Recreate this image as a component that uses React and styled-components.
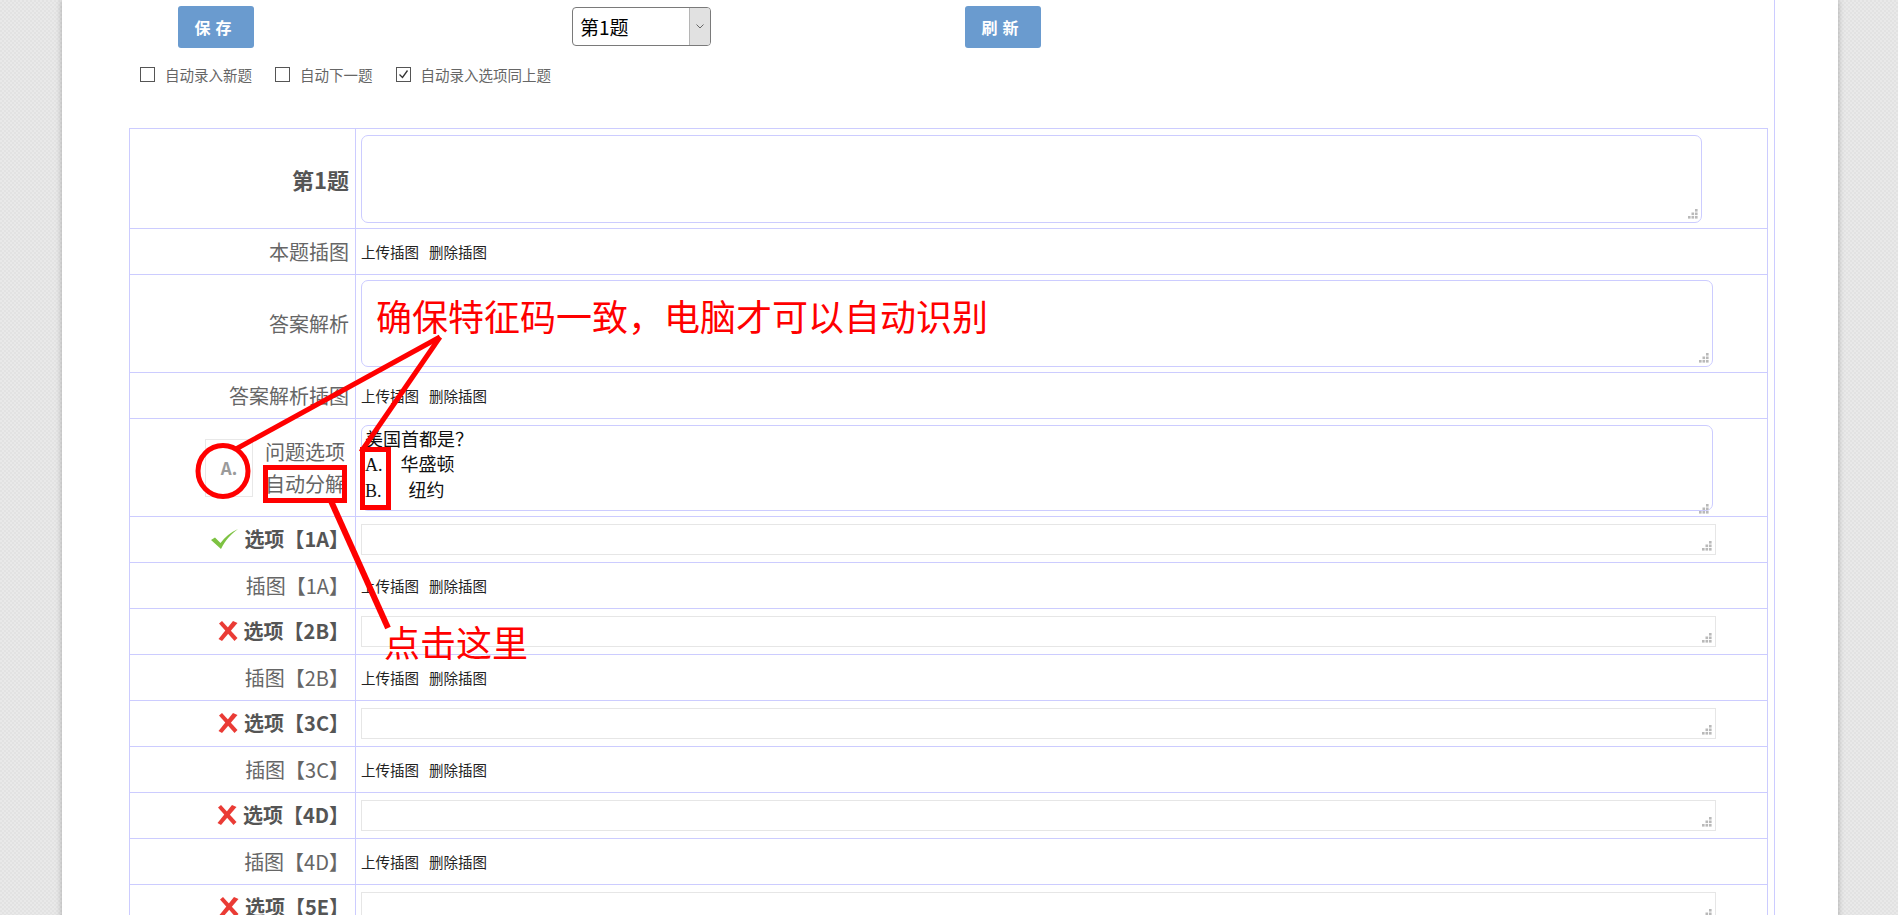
import React from "react";
import styled, { createGlobalStyle } from "styled-components";

const GlobalStyle = createGlobalStyle`
  html, body {
    margin: 0;
    padding: 0;
    overflow: hidden;
  }
  body {
    font-family: "Noto Sans CJK SC", "Noto Sans", sans-serif;
    background-color: #e9e9e9;
    background-image:
      linear-gradient(45deg, #e2e2e2 25%, transparent 25%, transparent 75%, #e2e2e2 75%),
      linear-gradient(45deg, #e2e2e2 25%, transparent 25%, transparent 75%, #e2e2e2 75%);
    background-size: 4px 4px;
    background-position: 0 0, 2px 2px;
  }
`;

const Root = styled.div`
  position: relative;
  height: 915px;
  overflow: hidden;
`;

const Page = styled.div`
  margin-left: 62px;
  width: 1776px;
  min-height: 915px;
  background: #fff;
  box-shadow: 0 0 6px rgba(0, 0, 0, 0.28);
`;

const Frame = styled.div`
  margin-right: 63px;
  min-height: 915px;
  border-right: 1px solid #ccccff;
`;

const Toolbar = styled.div`
  display: flex;
  align-items: flex-start;
  padding: 6px 0 0 116px;
`;

const BlueButton = styled.button`
  margin-left: ${(p) => p.$offset || 0}px;
  width: 76px;
  height: 42px;
  border: none;
  border-radius: 3px;
  background: #6a9bcf;
  color: #fff;
  font-family: "Noto Sans CJK SC", sans-serif;
  font-size: 16px;
  font-weight: bold;
  letter-spacing: 5px;
  padding-left: 5px;
  cursor: pointer;
`;

const SelectBox = styled.div`
  margin-left: ${(p) => p.$offset || 0}px;
  margin-top: 1px;
  display: flex;
  width: 139px;
  height: 39px;
  box-sizing: border-box;
  border: 1px solid #7a7a7a;
  border-radius: 4px;
  overflow: hidden;
  background: #fff;
`;

const SelectValue = styled.span`
  flex: 1;
  display: flex;
  align-items: center;
  padding-left: 7px;
  font-size: 19px;
  color: #000;
`;

const SelectArrow = styled.span`
  width: 20px;
  display: flex;
  align-items: center;
  justify-content: center;
  background: #e1e1e1;
  border-left: 1px solid #b5b5b5;
`;

const ChecksRow = styled.div`
  display: flex;
  align-items: center;
  padding: 18px 0 0 78px;
  height: 17px;
`;

const CheckItem = styled.label`
  display: flex;
  align-items: center;
  margin-right: 23px;
  font-size: 14.5px;
  color: #666;
`;

const Box = styled.span`
  width: 13px;
  height: 13px;
  border: 1px solid #555;
  margin-right: 10px;
  display: flex;
  align-items: center;
  justify-content: center;
  background: #fff;
`;

const Table = styled.table`
  margin: 45px 0 0 67px;
  width: 1639px;
  border-collapse: collapse;
  border: 1px solid #ccccff;
`;

const Row = styled.tr`
  height: ${(p) => p.$h}px;
`;

const LabelCell = styled.td`
  width: 219px;
  border: 1px solid #ccccff;
  padding: 0 6px 0 0;
  text-align: right;
  vertical-align: middle;
  font-size: ${(p) => (p.$big ? 22 : 20)}px;
  font-weight: ${(p) => (p.$bold ? "bold" : "normal")};
  color: ${(p) => (p.$bold ? "#555" : "#666")};
  white-space: nowrap;
`;

const LabelInner = styled.span`
  display: inline-flex;
  align-items: center;
  gap: 6px;
`;

const ContentCell = styled.td`
  border: 1px solid #ccccff;
  padding: 0 0 0 5px;
  vertical-align: middle;
`;

const Links = styled.div`
  display: flex;
  gap: 10px;
  font-size: 14.5px;
  color: #222;
`;

const Field = styled.div`
  width: ${(p) => p.$w}px;
  height: ${(p) => p.$h}px;
  box-sizing: border-box;
  border: 1px solid ${(p) => (p.$plain ? "#e6e6e6" : "#ccccff")};
  border-radius: ${(p) => (p.$plain ? 0 : 7)}px;
  padding: 2px 3px 3px 3px;
  display: flex;
  flex-direction: column;
  background: #fff;
`;

const FieldText = styled.div`
  flex: 1;
  font-family: "Liberation Serif", "Noto Sans CJK SC", serif;
  font-size: 18px;
  line-height: 25.5px;
  color: #111;
  white-space: pre;
`;

const GripWrap = styled.span`
  align-self: flex-end;
  display: flex;
  margin-top: auto;
`;

const SplitLabel = styled.div`
  display: flex;
  align-items: center;
  justify-content: flex-end;
  gap: 12px;
`;

const KeyBox = styled.span`
  width: 46px;
  height: 56px;
  border: 1px solid #e8e8e8;
  display: flex;
  align-items: center;
  justify-content: center;
  font-size: 17px;
  font-weight: bold;
  color: #9a9a9a;
`;

const TwoLines = styled.span`
  display: flex;
  flex-direction: column;
  line-height: 32px;
  padding-right: 4px;
`;

const Overlay = styled.div`
  position: absolute;
  left: 0;
  top: 0;
  width: 1898px;
  height: 915px;
  pointer-events: none;
`;

const Note = styled.span`
  position: absolute;
  left: ${(p) => p.$x}px;
  top: ${(p) => p.$y}px;
  font-family: "Noto Sans CJK SC", sans-serif;
  font-size: 36px;
  line-height: 36px;
  color: #ff0000;
  white-space: nowrap;
`;

function Grip() {
  const dots = [
    [7, 0],
    [3.5, 3.5],
    [7, 3.5],
    [0, 7],
    [3.5, 7],
    [7, 7],
  ];
  return (
    <GripWrap>
      <svg width="10" height="10" viewBox="0 0 10 10">
        {dots.map(([x, y], i) => (
          <rect key={i} x={x} y={y} width="2.6" height="2.6" fill="#b9b9b9" />
        ))}
      </svg>
    </GripWrap>
  );
}

function RightIcon() {
  return (
    <svg width="27" height="20" viewBox="0 0 27 20">
      <path d="M0 11 L4 8.5 L9.5 14 C14 8 19.5 3.5 27 0 C20 5 14.5 11 10 20 Z" fill="#7dc242" />
    </svg>
  );
}

function WrongIcon() {
  return (
    <svg width="20" height="20" viewBox="0 0 20 20">
      <path d="M1 2.5 L4 0 L19.5 17 L16.5 20 Z" fill="#ea3b35" />
      <path d="M15 0 L19.5 2 L4 20 L0.5 18 Z" fill="#ea3b35" />
    </svg>
  );
}

function CheckBox({ label, checked }) {
  return (
    <CheckItem>
      <Box>
        {checked && (
          <svg width="11" height="11" viewBox="0 0 11 11">
            <path d="M1.5 5.5 L4.5 8.5 L9.5 1.5" stroke="#333" strokeWidth="1.3" fill="none" />
          </svg>
        )}
      </Box>
      {label}
    </CheckItem>
  );
}

function PicRow({ label }) {
  return (
    <Row $h={46}>
      <LabelCell>{label}</LabelCell>
      <ContentCell>
        <Links>
          <span>上传插图</span>
          <span>删除插图</span>
        </Links>
      </ContentCell>
    </Row>
  );
}

function OptionRow({ code, right }) {
  return (
    <Row $h={46}>
      <LabelCell $bold>
        <LabelInner>
          {right ? <RightIcon /> : <WrongIcon />}
          <span>选项【{code}】</span>
        </LabelInner>
      </LabelCell>
      <ContentCell>
        <Field $plain $w={1355} $h={31}>
          <Grip />
        </Field>
      </ContentCell>
    </Row>
  );
}

const options = [
  { code: "1A", right: true },
  { code: "2B" },
  { code: "3C" },
  { code: "4D" },
  { code: "5E" },
];

function Annotations() {
  return (
    <Overlay>
      <svg width="1898" height="915" viewBox="0 0 1898 915">
        <g stroke="#ff0000" strokeWidth="5" fill="none">
          <line x1="440" y1="337" x2="236" y2="449" />
          <line x1="440" y1="337" x2="361" y2="452" />
          <ellipse cx="223" cy="471" rx="25" ry="25.5" />
          <rect x="265.5" y="467.5" width="79" height="33" />
          <rect x="362.5" y="449.5" width="26" height="58" />
          <line x1="331" y1="501" x2="388" y2="628" strokeWidth="6" />
        </g>
      </svg>
      <Note $x={376} $y={297}>确保特征码一致，电脑才可以自动识别</Note>
      <Note $x={384} $y={623}>点击这里</Note>
    </Overlay>
  );
}

export default function App() {
  return (
    <Root>
      <GlobalStyle />
      <Page>
        <Frame>
          <Toolbar>
            <BlueButton>保存</BlueButton>
            <SelectBox $offset={318}>
              <SelectValue>第1题</SelectValue>
              <SelectArrow>
                <svg width="8" height="5" viewBox="0 0 8 5">
                  <path d="M0.5 0.5 L4 4 L7.5 0.5" stroke="#666" strokeWidth="1" fill="none" />
                </svg>
              </SelectArrow>
            </SelectBox>
            <BlueButton $offset={254}>刷新</BlueButton>
          </Toolbar>
          <ChecksRow>
            <CheckBox label="自动录入新题" />
            <CheckBox label="自动下一题" />
            <CheckBox label="自动录入选项同上题" checked />
          </ChecksRow>
          <Table>
            <tbody>
              <Row $h={100}>
                <LabelCell $bold $big>第1题</LabelCell>
                <ContentCell>
                  <Field $w={1341} $h={88}>
                    <Grip />
                  </Field>
                </ContentCell>
              </Row>
              <PicRow label="本题插图" />
              <Row $h={98}>
                <LabelCell>答案解析</LabelCell>
                <ContentCell>
                  <Field $w={1352} $h={87}>
                    <Grip />
                  </Field>
                </ContentCell>
              </Row>
              <PicRow label="答案解析插图" />
              <Row $h={98}>
                <LabelCell>
                  <SplitLabel>
                    <KeyBox>A.</KeyBox>
                    <TwoLines>
                      <span>问题选项</span>
                      <span>自动分解</span>
                    </TwoLines>
                  </SplitLabel>
                </LabelCell>
                <ContentCell>
                  <Field $w={1352} $h={86}>
                    <FieldText>{"美国首都是？\nA.\u3000华盛顿\nB.\u3000\u00a0\u00a0纽约"}</FieldText>
                    <Grip />
                  </Field>
                </ContentCell>
              </Row>
              {options.map((o) => (
                <React.Fragment key={o.code}>
                  <OptionRow code={o.code} right={o.right} />
                  <PicRow label={`插图【${o.code}】`} />
                </React.Fragment>
              ))}
            </tbody>
          </Table>
        </Frame>
      </Page>
      <Annotations />
    </Root>
  );
}
